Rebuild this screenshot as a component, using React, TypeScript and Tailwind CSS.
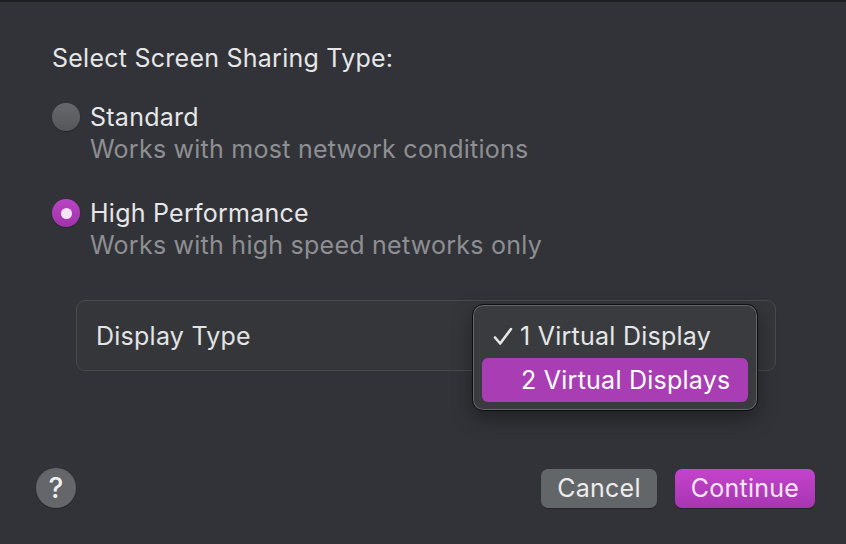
import React from "react";

const font = { fontFamily: "Inter, 'Noto Sans', sans-serif" };

function Radio({ checked }: { checked: boolean }) {
  if (checked) {
    return (
      <div className="w-[28px] h-[28px] rounded-full bg-gradient-to-b from-[#bb44c4] to-[#a033a9] flex items-center justify-center shadow-[0_1px_1px_rgba(0,0,0,0.3)]">
        <div className="w-[11px] h-[11px] rounded-full bg-[#f4e4f5]" />
      </div>
    );
  }
  return (
    <div className="w-[28px] h-[28px] rounded-full bg-gradient-to-b from-[#66686b] to-[#55575a] shadow-[0_1px_1px_rgba(0,0,0,0.3)]" />
  );
}

function Option({
  checked,
  title,
  hint,
}: {
  checked: boolean;
  title: string;
  hint: string;
}) {
  return (
    <div className="flex flex-col">
      <div className="flex items-center gap-[10px] h-[32px] leading-[32px]">
        <Radio checked={checked} />
        <span className="text-[#e6e6e7]">{title}</span>
      </div>
      <div className="pl-[38px] h-[32px] leading-[32px] text-[#8e8f92]">{hint}</div>
    </div>
  );
}

export default function App() {
  return (
    <div
      className="w-[846px] h-[544px] bg-[#313338] border-t-2 border-[#1c1d20] flex flex-col text-[25px] tracking-[0.25px] antialiased"
      style={font}
    >
      <div className="pl-[52px] pt-[40px] flex flex-col">
        <div className="h-[32px] leading-[32px] text-[#e6e6e7]">Select Screen Sharing Type:</div>
        <div className="mt-[27px]">
          <Option checked={false} title="Standard" hint="Works with most network conditions" />
        </div>
        <div className="mt-[32px]">
          <Option checked={true} title="High Performance" hint="Works with high speed networks only" />
        </div>
      </div>

      <div className="ml-[76px] mt-[39px] w-[700px] h-[71px] rounded-[9px] border border-[#48494d] bg-[#34363a] flex items-center pl-[19px] relative">
        <span className="leading-[32px] text-[#e3e3e4]">Display Type</span>

        {/* popup menu of the display type selector */}
        <div className="absolute left-[395px] top-[3px] w-[286px] h-[107px] rounded-[11px] border border-[#0e0f10] bg-[#393b3f] shadow-[inset_0_0_0_1px_rgba(255,255,255,0.22),0_8px_20px_rgba(0,0,0,0.35)] px-[9px] pt-[9px] flex flex-col">
          <div className="h-[44px] flex items-center relative text-[#e6e6e7]">
            <svg
              className="absolute left-[11px] top-[13px]"
              width="20"
              height="19"
              viewBox="0 0 20 19"
              fill="none"
            >
              <path
                d="M2 10.5 L7.2 16.5 L18 2"
                stroke="#e6e6e7"
                strokeWidth="2.6"
                strokeLinecap="round"
                strokeLinejoin="round"
              />
            </svg>
            <span className="pl-[38px] leading-[32px]">1 Virtual Display</span>
          </div>
          <div className="h-[44px] rounded-[6px] bg-[#a93db4] flex items-center text-white">
            <span className="pl-[39px] leading-[32px]">2 Virtual Displays</span>
          </div>
        </div>
      </div>

      <div className="mt-auto mb-[36px] flex items-center pl-[36px] pr-[31px]">
        <button className="w-[40px] h-[40px] rounded-full bg-[#646669] text-[#f0f0f0] text-[28px] font-medium leading-none flex items-center justify-center shadow-[0_1px_1px_rgba(0,0,0,0.3)]">
          ?
        </button>
        <div className="ml-auto flex items-center gap-[18px]">
          <button className="w-[116px] h-[39px] rounded-[7px] bg-[#636669] text-[#ececec] leading-none flex items-center justify-center shadow-[0_1px_1px_rgba(0,0,0,0.3)]">
            Cancel
          </button>
          <button className="w-[140px] h-[39px] rounded-[7px] bg-gradient-to-b from-[#c443cd] to-[#a736b0] text-[#f6e8f7] leading-none flex items-center justify-center shadow-[0_1px_1px_rgba(0,0,0,0.3)]">
            Continue
          </button>
        </div>
      </div>
    </div>
  );
}
